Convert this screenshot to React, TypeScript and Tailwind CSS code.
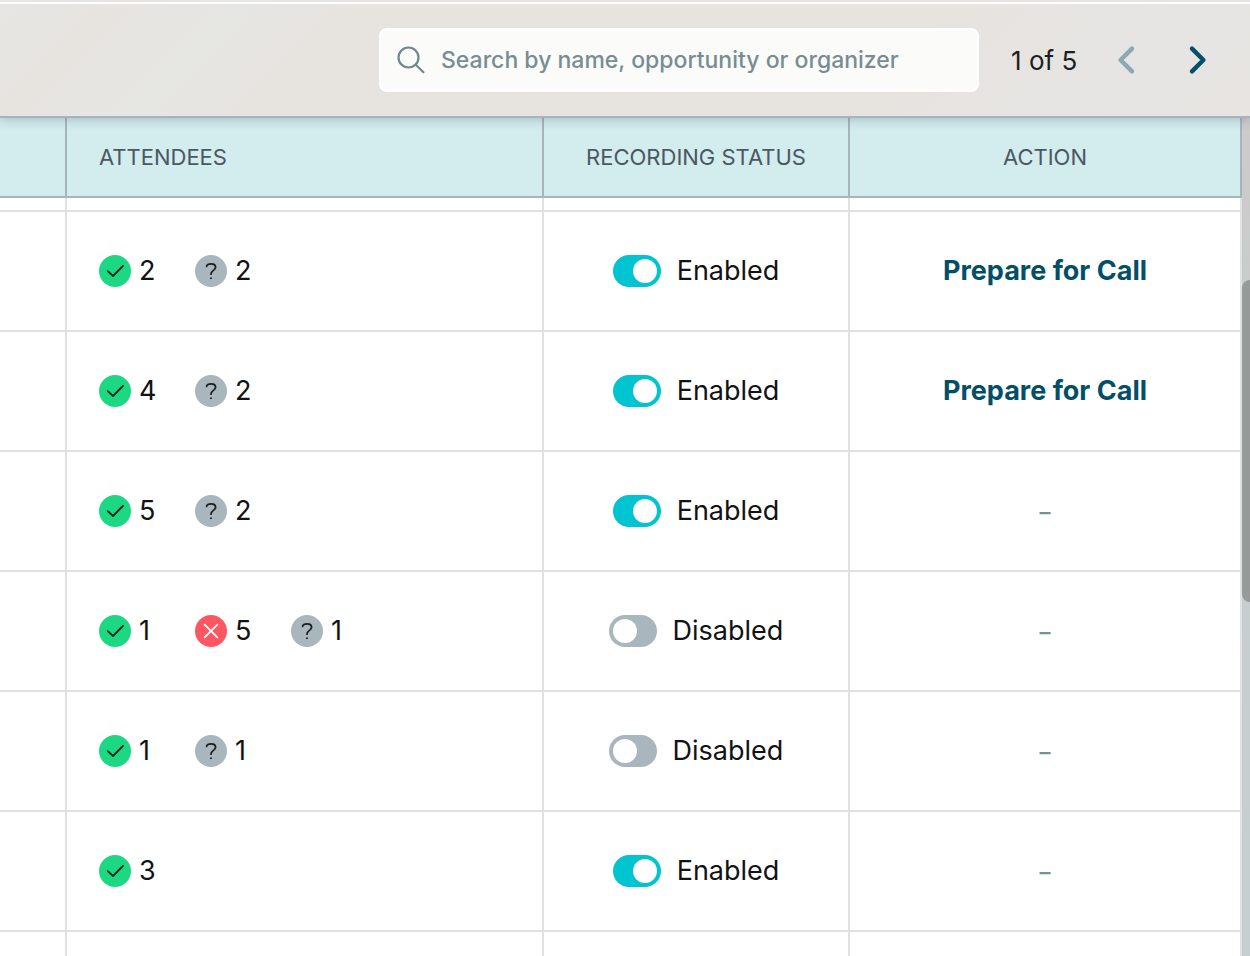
import React from "react";

type Status = "accepted" | "declined" | "unknown";

type Call = {
  id: number;
  attendees: { status: Status; count: number }[];
  recording: boolean;
  prepare: boolean;
};

const calls: Call[] = [
  { id: 1, attendees: [{ status: "accepted", count: 2 }, { status: "unknown", count: 2 }], recording: true, prepare: true },
  { id: 2, attendees: [{ status: "accepted", count: 4 }, { status: "unknown", count: 2 }], recording: true, prepare: true },
  { id: 3, attendees: [{ status: "accepted", count: 5 }, { status: "unknown", count: 2 }], recording: true, prepare: false },
  { id: 4, attendees: [{ status: "accepted", count: 1 }, { status: "declined", count: 5 }, { status: "unknown", count: 1 }], recording: false, prepare: false },
  { id: 5, attendees: [{ status: "accepted", count: 1 }, { status: "unknown", count: 1 }], recording: false, prepare: false },
  { id: 6, attendees: [{ status: "accepted", count: 3 }], recording: true, prepare: false },
];

const headCell = "border-r-2 border-b-2 border-[#a8b4bd] bg-[#d3ecee] font-normal";
const bodyCell = "border-r-2 border-b-2 border-[#e0e1e3] bg-white p-0";

const StatusIcon: React.FC<{ status: Status }> = ({ status }) => (
  <svg viewBox="0 0 32 32" className="h-8 w-8 shrink-0" fill="none" strokeWidth="1.8" strokeLinecap="round" strokeLinejoin="round" aria-label={status}>
    {status === "accepted" && (
      <>
        <circle cx="16" cy="16" r="16" fill="#1dd882" />
        <path d="M8.8 16.2L14 21L24 10.8" stroke="#10231b" />
      </>
    )}
    {status === "declined" && (
      <>
        <circle cx="16" cy="16" r="16" fill="#ff5762" />
        <path d="M9.6 9.6L22.4 22.4M22.4 9.6L9.6 22.4" stroke="#ffffff" />
      </>
    )}
    {status === "unknown" && (
      <>
        <circle cx="16" cy="16" r="16" fill="#a9b6be" />
        <path d="M11.6 11.4C11.9 9.5 13.6 8.8 16 8.8C18.8 8.8 20.6 10 20.6 12.2C20.6 15.6 16 15.2 16 19.2" stroke="#1b1f22" />
        <path d="M15.1 22.4H16.9V24.1H15.1Z" fill="#1b1f22" />
      </>
    )}
  </svg>
);

const Toolbar: React.FC = () => (
  <div className="relative z-10 border-b-2 border-[#a8b4bd] bg-[linear-gradient(135deg,#e7e6e2_0%,#e7e4e0_9%,#e6e6e3_18%,#e7e3df_28%,#e7e3df_70%,#e6e5e3_88%,#e7e4e1_100%)] shadow-[0_2px_10px_rgba(70,90,95,0.3)]">
    <div className="mt-[2px] h-[2px] bg-white" />
    <div className="flex h-28 items-center justify-end gap-8 pr-9">
      <label className="flex h-16 w-[600px] items-center gap-4 rounded-lg border-2 border-white bg-[#fbfbf9] pl-4">
        <svg viewBox="0 0 28 28" className="h-7 w-7 shrink-0" fill="none" stroke="#6f878f" strokeWidth="2.2" strokeLinecap="round" aria-hidden="true">
          <circle cx="11.5" cy="11.5" r="10" />
          <path d="M18.8 18.8L26.4 26.2" />
        </svg>
        <input
          type="text"
          aria-label="Search calls"
          placeholder="Search by name, opportunity or organizer"
          className="h-full min-w-0 flex-1 bg-transparent text-[23px] font-medium outline-none placeholder:text-[#768d94]"
        />
      </label>
      <div className="w-[67px] whitespace-nowrap text-[26px] text-[#1c1f21]">1 of 5</div>
      <div className="flex gap-10">
        <button type="button" aria-label="Previous page" className="h-8 w-8">
          <svg viewBox="0 0 32 32" fill="none" stroke="#8ba8b3" strokeWidth="4.4" strokeLinecap="round" strokeLinejoin="round">
            <path d="M22 4.6L10.6 16L22 27.4" />
          </svg>
        </button>
        <button type="button" aria-label="Next page" className="h-8 w-8">
          <svg viewBox="0 0 32 32" fill="none" stroke="#054f69" strokeWidth="4.4" strokeLinecap="round" strokeLinejoin="round">
            <path d="M10 4.6L21.4 16L10 27.4" />
          </svg>
        </button>
      </div>
    </div>
  </div>
);

const CallRow: React.FC<{ call: Call }> = ({ call }) => (
  <tr className="h-[120px]">
    <td className={bodyCell}></td>
    <td className={bodyCell}>
      <div className="flex pl-8">
        {call.attendees.map((a) => (
          <div key={a.status} className="flex w-24 items-center gap-2">
            <StatusIcon status={a.status} />
            <span>{a.count}</span>
          </div>
        ))}
      </div>
    </td>
    <td className={bodyCell}>
      <label className="flex items-center justify-center gap-4">
        <input
          type="checkbox"
          defaultChecked={call.recording}
          className="flex h-8 w-12 appearance-none items-center rounded-full bg-[#a9b6be] px-1 before:h-6 before:w-6 before:rounded-full before:bg-white before:content-[''] checked:justify-end checked:bg-[#00c4d0]"
        />
        <span>{call.recording ? "Enabled" : "Disabled"}</span>
      </label>
    </td>
    <td className={`${bodyCell} text-center`}>
      {call.prepare ? (
        <a href="#prepare" className="font-bold text-[#034e68]">Prepare for Call</a>
      ) : (
        <span className="text-[22px] font-semibold text-[#7b9199]">–</span>
      )}
    </td>
  </tr>
);

const App: React.FC = () => {
  return (
    <div className="flex h-screen flex-col overflow-hidden bg-white font-['Inter','DM_Sans',sans-serif]">
      <Toolbar />
      <div className="flex min-h-0 flex-1">
        <div className="min-w-0 flex-1 overflow-hidden">
          <table className="w-full table-fixed border-separate border-spacing-0 text-[27px] text-[#111314]">
            <colgroup>
              <col className="w-[67px]" />
              <col />
              <col className="w-[306px]" />
              <col className="w-[392px]" />
            </colgroup>
            <thead>
              <tr className="h-20 text-[22px] text-[#4a5863]">
                <th className={headCell}></th>
                <th className={`${headCell} pl-8 text-left`}>ATTENDEES</th>
                <th className={headCell}>RECORDING STATUS</th>
                <th className={headCell}>ACTION</th>
              </tr>
            </thead>
            <tbody>
              {/* bottom edge of the row scrolled under the header */}
              <tr className="h-[14px]">
                <td className={bodyCell}></td>
                <td className={bodyCell}></td>
                <td className={bodyCell}></td>
                <td className={bodyCell}></td>
              </tr>
              {calls.map((call) => (
                <CallRow key={call.id} call={call} />
              ))}
              <tr className="h-[120px]">
                <td className={bodyCell}></td>
                <td className={bodyCell}></td>
                <td className={bodyCell}></td>
                <td className={bodyCell}></td>
              </tr>
            </tbody>
          </table>
        </div>
        <div className="w-2 overflow-hidden bg-linear-to-b from-[#cdcaca] via-[#c9cccb] via-20% to-[#c5cfd1] pt-[162px]">
          <div className="h-[322px] w-4 rounded-full bg-[#969a99]" />
        </div>
      </div>
    </div>
  );
};

export default App;
